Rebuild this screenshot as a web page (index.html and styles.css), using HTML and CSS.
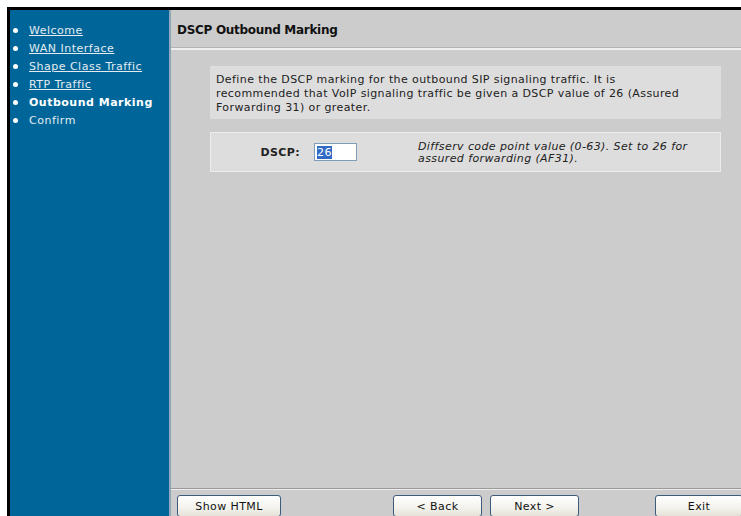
FILE: index.html
```html
<!DOCTYPE html>
<html>
<head>
<meta charset="utf-8">
<title>DSCP Outbound Marking</title>
<link rel="stylesheet" href="styles.css">
</head>
<body>
<div class="frame">
  <nav class="sidebar">
    <ul class="steps">
      <li><a href="#">Welcome</a></li>
      <li><a href="#">WAN Interface</a></li>
      <li><a href="#">Shape Class Traffic</a></li>
      <li><a href="#">RTP Traffic</a></li>
      <li class="current">Outbound Marking</li>
      <li class="pending">Confirm</li>
    </ul>
  </nav>
  <main class="main">
    <header class="page-head">DSCP Outbound Marking</header>
    <section class="content">
      <p class="intro">Define the DSCP marking for the outbound SIP signaling traffic. It is<br>recommended that VoIP signaling traffic be given a DSCP value of 26 (Assured<br>Forwarding 31) or greater.</p>
      <div class="field-row">
        <label class="field-label">DSCP:</label>
        <div class="field-input"><span class="sel">26</span></div>
        <div class="field-help">Diffserv code point value (0-63). Set to 26 for<br>assured forwarding (AF31).</div>
      </div>
    </section>
    <footer class="actions">
      <button class="btn btn-html">Show HTML</button>
      <button class="btn btn-back">&lt; Back</button>
      <button class="btn btn-next">Next &gt;</button>
      <button class="btn btn-exit">Exit</button>
    </footer>
  </main>
</div>
</body>
</html>
```

FILE: styles.css
```css
html, body {
  margin: 0;
  padding: 0;
  background: #ffffff;
  overflow: hidden;
  height: 516px;
}

body {
  font-family: "DejaVu Sans", Verdana, sans-serif;
  font-size: 11px;
  letter-spacing: 0.4px;
  color: #222;
}

.frame {
  margin: 7px 0 0 7px;
  width: 742px;
  height: 520px;
  border-top: 3px solid #000;
  border-left: 3px solid #000;
  display: flex;
}

/* left wizard step list */
.sidebar {
  width: 159px;
  flex: none;
  background: #006699;
  border-right: 2px solid #8fa7b9;
}

.steps {
  list-style: none;
  margin: 0;
  padding: 11px 0 0 3px;
}

.steps li {
  display: flex;
  align-items: center;
  height: 18px;
  color: #e4ecf2;
  white-space: nowrap;
  letter-spacing: 0.5px;
}

.steps li::before {
  content: "";
  width: 5px;
  height: 5px;
  border-radius: 50%;
  background: #fff;
  margin-right: 11px;
  flex: none;
}

.steps a {
  color: #e4ecf2;
  text-decoration: underline;
}

.steps .current {
  color: #fff;
  font-weight: bold;
}

/* right pane */
.main {
  flex: 1;
  background: #cccccc;
  display: flex;
  flex-direction: column;
  height: 506px;
}

.page-head {
  height: 38px;
  display: flex;
  align-items: center;
  padding: 2px 0 0 6px;
  box-sizing: border-box;
  font-weight: bold;
  font-size: 12px;
  letter-spacing: -0.3px;
  color: #111;
  border-bottom: 1px solid #b3b3b3;
  box-shadow: 0 2px 0 #eeeeee;
}

.content {
  flex: 1;
  padding: 18px 0 0 39px;
}

.intro {
  margin: 0;
  width: 499px;
  padding: 7px 6px 4px 6px;
  background: #dddddd;
  line-height: 14px;
}

.field-row {
  margin-top: 13px;
  width: 509px;
  height: 38px;
  background: #dddddd;
  border: 1px solid #ececec;
  display: flex;
  align-items: center;
}

.field-label {
  width: 89px;
  text-align: right;
  font-weight: bold;
  flex: none;
}

.field-input {
  margin-left: 14px;
  width: 39px;
  height: 16px;
  background: #fff;
  border: 1px solid #7f9db9;
  display: flex;
  align-items: center;
  padding-left: 2px;
  box-sizing: content-box;
  flex: none;
}

.sel {
  background: #316ac5;
  color: #fff;
  line-height: 13px;
}

.field-help {
  margin-left: 61px;
  margin-top: 2px;
  font-style: italic;
  line-height: 12px;
}

/* bottom button bar */
.actions {
  height: 21px;
  border-top: 1px solid #9a9a9a;
  box-shadow: inset 0 1px 0 #eeeeee;
  padding: 6px 0 0 6px;
  display: flex;
  align-items: flex-start;
}

.btn {
  height: 22px;
  font-family: "DejaVu Sans", Verdana, sans-serif;
  font-size: 11px;
  letter-spacing: 0.4px;
  color: #111;
  background: linear-gradient(#ffffff, #f3f2ec 60%, #e4e2d8);
  border: 1px solid #3d5b7c;
  border-radius: 3px;
  padding: 0;
  flex: none;
}

.btn-html { width: 104px; }
.btn-back { width: 89px; margin-left: 112px; }
.btn-next { width: 89px; margin-left: 8px; }
.btn-exit { width: 88px; margin-left: 76px; }
```
